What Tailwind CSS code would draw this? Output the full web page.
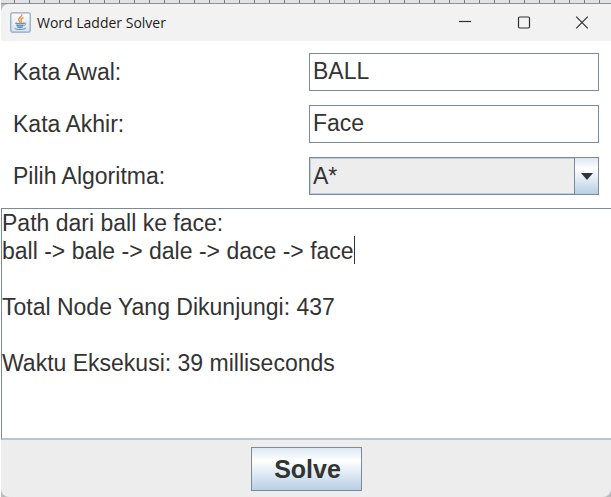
<!DOCTYPE html>
<html lang="id">
<head>
<meta charset="utf-8">
<meta name="viewport" content="width=device-width, initial-scale=1">
<title>Word Ladder Solver</title>
<script src="https://cdn.jsdelivr.net/npm/@tailwindcss/browser@4"></script>
</head>
<body class="flex h-screen flex-col overflow-hidden bg-white pl-px font-['Liberation_Sans',Arial,sans-serif] text-[23px] leading-7 text-[#333333]">
<div class="h-1 shrink-0 border-b border-[#8f9193] bg-[repeating-linear-gradient(90deg,#e0e1e3_0_13px,#77797b_13px_14px,#e0e1e3_14px_15px)]" aria-hidden="true"></div>
<main class="flex min-h-0 flex-1 flex-col bg-[#b9bbbd]">
  <header class="flex h-[37px] shrink-0 items-center rounded-tl-lg bg-[#f2f2f2] pl-[9px]">
    <svg class="size-[21px] shrink-0" viewBox="0 0 21 21" fill="none" aria-hidden="true">
      <defs><linearGradient id="tile" x1="0" y1="0" x2="0" y2="1"><stop stop-color="#fdfdfd"/><stop offset="1" stop-color="#d6e2ed"/></linearGradient></defs>
      <rect x=".8" y=".8" width="19.4" height="19.4" rx="1.6" fill="url(#tile)" stroke="#8aa7c2" stroke-width="1.2"/>
      <path d="M11.8 2.8c.5 1.7-3.3 2.8-3.2 4.8 0 1.2 1.2 1.7 1.3 2.8M13 5.8c-1.9.8-2.6 1.7-1.8 2.7.5.8.3 1.4-.3 2" stroke="#ef9238" stroke-width="1.4" stroke-linecap="round"/>
      <path d="M5.8 11.1c2 .7 6 .7 8 0M6.8 13.2c1.8.7 4.6.7 6.3 0M7.4 15c1.7.6 3.6.6 5.1 0" stroke="#5f89ad" stroke-width="1.3" stroke-linecap="round"/>
      <path d="M14.2 11c2.3-.5 2.3 1.8-.2 2.5M4.8 16.2c-1 1.7 9.5 2 11 0" stroke="#5f89ad" stroke-linecap="round"/>
    </svg>
    <h1 class="ml-[6px] flex-1 font-['Open_Sans','Noto_Sans',sans-serif] text-[14px] leading-5 text-[#1d1d1d]">Word Ladder Solver</h1>
    <button type="button" aria-label="Minimize" class="flex h-full w-[59px] items-center justify-center"><svg class="size-[14px]" viewBox="0 0 14 14" fill="none" stroke="#303030"><path d="M1 5.5h12" stroke-width="1.2"/></svg></button>
    <button type="button" aria-label="Maximize" class="flex h-full w-[59px] items-center justify-center"><svg class="size-[14px]" viewBox="0 0 14 14" fill="none" stroke="#303030"><rect x="1.5" y="1" width="11" height="11" rx="1.2" stroke-width="1.2"/></svg></button>
    <button type="button" aria-label="Close" class="flex h-full w-[58px] items-center justify-center"><svg class="size-[14px]" viewBox="0 0 14 14" fill="none" stroke="#303030"><path d="m1.2.7 11.6 11.6m0-11.6L1.2 12.3" stroke-width="1.2"/></svg></button>
  </header>
  <form class="flex min-h-0 flex-1 flex-col rounded-b-lg bg-[#ededed]">
    <div class="grid shrink-0 grid-cols-2 items-center gap-x-[6px] gap-y-[14px] bg-white px-3 pt-3 pb-[13px]">
      <label for="start">Kata Awal:</label>
      <input id="start" type="text" value="BALL" class="h-[38px] w-full min-w-0 border border-[#7a8a99] bg-white px-[3px] pb-px outline-none">
      <label for="end">Kata Akhir:</label>
      <input id="end" type="text" value="Face" class="h-[38px] w-full min-w-0 border border-[#7a8a99] bg-white px-[3px] pb-px outline-none">
      <label for="algorithm">Pilih Algoritma:</label>
      <div class="relative h-[38px]">
        <select id="algorithm" class="size-full appearance-none border border-[#7a8a99] bg-[#ededed] px-[3px] pb-px shadow-[inset_0_0_0_1px_#b8cfe5] outline-none"><option>A*</option><option>UCS</option><option>Greedy Best First Search</option></select>
        <span class="pointer-events-none absolute inset-y-px right-px flex w-6 items-center justify-center border-l border-[#7a8a99] bg-linear-to-b from-[#dce8f3] via-white via-30% to-[#b8cfe5]" aria-hidden="true"><svg class="h-[7px] w-3" viewBox="0 0 12 7"><path d="M0 0h12L6 7Z" fill="#333"/></svg></span>
      </div>
    </div>
    <div class="relative flex min-h-0 flex-1">
      <textarea aria-label="Hasil" spellcheck="false" class="w-full resize-none overflow-hidden border-t border-b-2 border-l border-t-[#7a8a99] border-b-[#b8c4cf] border-l-[#7a8a99] bg-white outline-none">Path dari ball ke face:
ball -&gt; bale -&gt; dale -&gt; dace -&gt; face

Total Node Yang Dikunjungi: 437

Waktu Eksekusi: 39 milliseconds</textarea>
      <span class="absolute top-7 left-[353px] h-7 w-px bg-[#333333]" aria-hidden="true"></span>
    </div>
    <footer class="flex shrink-0 justify-center pt-[7px] pb-[6px]">
      <button type="button" class="h-11 w-[111px] border border-[#7a8a99] bg-linear-to-b from-[#dce8f3] via-white via-30% to-[#b8cfe5] pl-[3px] text-[25px] font-bold">Solve</button>
    </footer>
  </form>
</main>
</body>
</html>
